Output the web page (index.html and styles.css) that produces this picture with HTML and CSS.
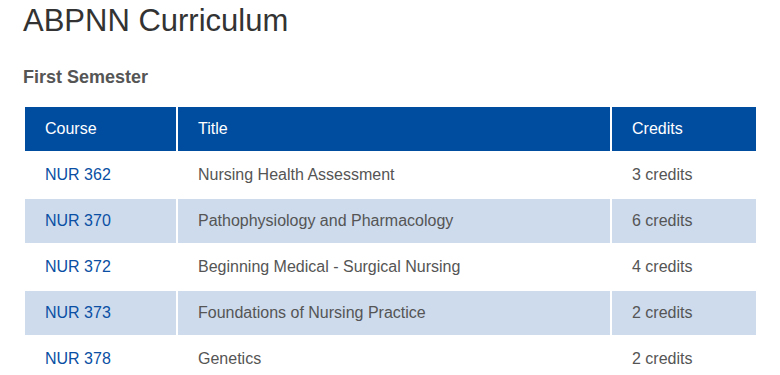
FILE: index.html
```html
<!DOCTYPE html>
<html lang="en">
<head>
    <meta charset="UTF-8">
    <meta name="viewport" content="width=device-width, initial-scale=1.0">
    <title>ABPNN Curriculum</title>
    <link rel="stylesheet" href="styles.css">
</head>
<body>
    <main class="curriculum">
        <h1>ABPNN Curriculum</h1>
        <h3>First Semester</h3>

        <table class="courses">
            <thead>
                <tr>
                    <th class="col-course">Course</th>
                    <th class="col-title">Title</th>
                    <th class="col-credits">Credits</th>
                </tr>
            </thead>
            <tbody>
                <tr>
                    <td><a href="#">NUR 362</a></td>
                    <td>Nursing Health Assessment</td>
                    <td>3 credits</td>
                </tr>
                <tr>
                    <td><a href="#">NUR 370</a></td>
                    <td>Pathophysiology and Pharmacology</td>
                    <td>6 credits</td>
                </tr>
                <tr>
                    <td><a href="#">NUR 372</a></td>
                    <td>Beginning Medical - Surgical Nursing</td>
                    <td>4 credits</td>
                </tr>
                <tr>
                    <td><a href="#">NUR 373</a></td>
                    <td>Foundations of Nursing Practice</td>
                    <td>2 credits</td>
                </tr>
                <tr>
                    <td><a href="#">NUR 378</a></td>
                    <td>Genetics</td>
                    <td>2 credits</td>
                </tr>
            </tbody>
        </table>
    </main>
</body>
</html>
```

FILE: styles.css
```css
body {
    margin: 0;
    font-family: "Liberation Sans", Arial, sans-serif;
    color: #555;
    background-color: #fff;
}

.curriculum {
    padding: 0 22px 0 23px;
}

h1 {
    font-size: 31px;
    font-weight: normal;
    color: #333;
    margin: 0;
    padding-top: 3px;
    line-height: 36px;
}

h3 {
    font-size: 18px;
    font-weight: bold;
    color: #555;
    margin: 27px 0 0;
    line-height: 22px;
}

.courses {
    border-collapse: separate;
    border-spacing: 2px;
    width: 735px;
    margin-top: 17px;
    font-size: 16px;
}

.courses th,
.courses td {
    height: 44px;
    padding: 0 20px;
    text-align: left;
    vertical-align: middle;
    box-sizing: border-box;
}

.courses th {
    background-color: #004c9f;
    color: #fff;
    font-weight: normal;
}

.col-course {
    width: 151px;
}

.col-title {
    width: 432px;
}

.courses tbody tr:nth-child(even) td {
    background-color: #cddbed;
}

.courses a {
    color: #0a4fa3;
    text-decoration: none;
}
```
